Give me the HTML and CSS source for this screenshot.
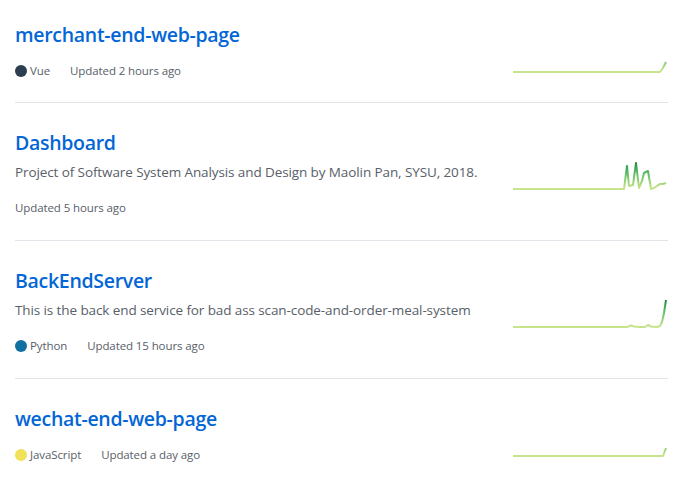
FILE: index.html
```html
<!DOCTYPE html>
<html lang="en">
<head>
<meta charset="utf-8">
<title>Repositories</title>
<link rel="stylesheet" href="styles.css">
</head>
<body>
<svg class="defs" width="0" height="0" aria-hidden="true">
  <defs>
    <linearGradient id="spark-grad" gradientUnits="userSpaceOnUse" x1="0" y1="30" x2="0" y2="0">
      <stop offset="10%" stop-color="#c6e48b"/>
      <stop offset="45%" stop-color="#7bc96f"/>
      <stop offset="80%" stop-color="#38a556"/>
      <stop offset="100%" stop-color="#24793d"/>
    </linearGradient>
  </defs>
</svg>
<ul class="repo-list">
  <li class="repo">
    <div class="repo-main">
      <h3 class="repo-title"><a href="#">merchant-end-web-page</a></h3>
      <div class="repo-meta">
        <span class="lang"><span class="lang-dot dot-vue"></span>Vue</span>
        <span class="updated">Updated 2 hours ago</span>
      </div>
    </div>
    <svg class="spark spark-nodesc" width="155" height="30" viewBox="0 0 155 30">
      <polyline points="0,28 147,28 150,24 153,18"/>
    </svg>
  </li>
  <li class="repo">
    <div class="repo-main">
      <h3 class="repo-title"><a href="#">Dashboard</a></h3>
      <p class="repo-desc">Project of Software System Analysis and Design by Maolin Pan, SYSU, 2018.</p>
      <div class="repo-meta">
        <span class="updated">Updated 5 hours ago</span>
      </div>
    </div>
    <svg class="spark spark-desc" width="155" height="30" viewBox="0 0 155 30">
      <polyline points="0,28 111,28 114,5 116,25 120,24 123,2 126,27 129,20 131,12 135,10 138,28 141,27 144,25 147,23 150,23 153,22"/>
    </svg>
  </li>
  <li class="repo">
    <div class="repo-main">
      <h3 class="repo-title"><a href="#">BackEndServer</a></h3>
      <p class="repo-desc">This is the back end service for bad ass scan-code-and-order-meal-system</p>
      <div class="repo-meta">
        <span class="lang"><span class="lang-dot dot-python"></span>Python</span>
        <span class="updated">Updated 15 hours ago</span>
      </div>
    </div>
    <svg class="spark spark-desc" width="155" height="30" viewBox="0 0 155 30">
      <polyline points="0,28 114,28 118,26.5 121,27.5 126,28 132,28 135,26 138,27.5 144,28 147,27 149,23 151,14 153,1"/>
    </svg>
  </li>
  <li class="repo">
    <div class="repo-main">
      <h3 class="repo-title"><a href="#">wechat-end-web-page</a></h3>
      <div class="repo-meta">
        <span class="lang"><span class="lang-dot dot-js"></span>JavaScript</span>
        <span class="updated">Updated a day ago</span>
      </div>
    </div>
    <svg class="spark spark-nodesc" width="155" height="30" viewBox="0 0 155 30">
      <polyline points="0,28 150,28 153,20"/>
    </svg>
  </li>
</ul>
</body>
</html>
```

FILE: styles.css
```css
html, body {
  margin: 0;
  padding: 0;
  background: #ffffff;
}

body {
  font-family: "Open Sans", "Noto Sans", "Liberation Sans", sans-serif;
  color: #24292e;
}

.defs {
  position: absolute;
  width: 0;
  height: 0;
}

.repo-list {
  list-style: none;
  margin: 0 21px 0 15px;
  padding: 0;
}

.repo {
  display: flex;
  justify-content: space-between;
  align-items: flex-start;
  padding: 27px 0 22px;
  border-bottom: 1px solid #e1e4e8;
}

.repo:first-child {
  padding-top: 22px;
}

.repo-main {
  display: flex;
  flex-direction: column;
}

.repo-title {
  margin: 0;
  font-size: 19.5px;
  letter-spacing: -0.3px;
  font-weight: 600;
  line-height: 26px;
}

.repo-title a {
  color: #0366d6;
  text-decoration: none;
}

.repo-desc {
  margin: 6px 0 0;
  font-size: 13.5px;
  letter-spacing: -0.1px;
  line-height: 20px;
  color: #586069;
}

.repo-meta {
  display: flex;
  align-items: center;
  margin-top: 14px;
  font-size: 11.5px;
  letter-spacing: -0.1px;
  line-height: 18px;
  color: #586069;
}

.repo-desc + .repo-meta {
  margin-top: 17px;
  margin-bottom: 1px;
}

.lang {
  display: inline-flex;
  align-items: center;
  margin-right: 20px;
}

.lang-dot {
  width: 12px;
  height: 12px;
  border-radius: 50%;
  margin-right: 3px;
}

.dot-vue { background: #2c3e50; }
.dot-python { background: #1170a0; }
.dot-js { background: #f1e05a; }

.spark {
  flex: none;
  overflow: visible;
}

.spark-nodesc {
  margin-top: 22px;
}

.spark-desc {
  margin-top: 31px;
}

.spark polyline {
  fill: none;
  stroke: url(#spark-grad);
  stroke-width: 2;
  stroke-linejoin: round;
}
```
